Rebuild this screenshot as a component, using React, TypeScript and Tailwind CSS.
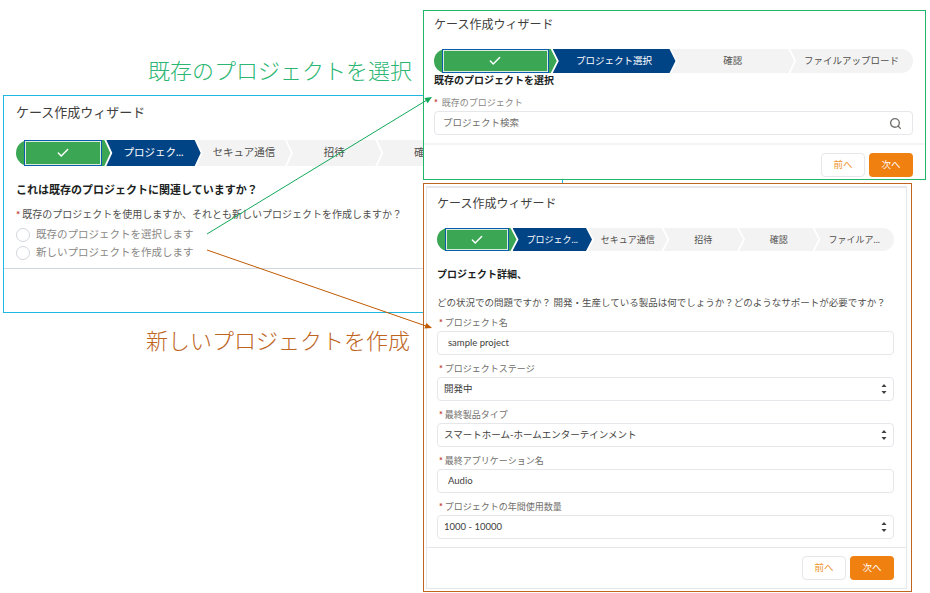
import { Check, Search } from "lucide-react"

const stepShapes = {
  first:
    "rounded-l-full [clip-path:polygon(0_0,calc(100%-6px)_0,100%_50%,calc(100%-6px)_100%,0_100%)]",
  middle:
    "[clip-path:polygon(0_0,calc(100%-6px)_0,100%_50%,calc(100%-6px)_100%,0_100%,6px_50%)]",
  last: "rounded-r-full [clip-path:polygon(0_0,100%_0,100%_100%,0_100%,6px_50%)]",
}

function Stepper({ steps, className }: { steps: string[]; className: string }) {
  return (
    <div className={`flex ${className}`}>
      {/* done step with the focus box */}
      <div className={`relative -mr-1 flex-1 bg-[#3ba755] px-2.5 ${stepShapes.first}`}>
        <div className="absolute inset-y-0 left-2 right-2 border border-[#0b5cab]">
          <div className="flex h-full items-center justify-center border border-white/80 bg-[#3ba755]">
            <Check size={14} strokeWidth={2.5} className="text-white" />
          </div>
        </div>
      </div>
      {steps.map((label, i) => (
        <div
          key={label}
          className={`flex min-w-0 flex-1 items-center justify-center whitespace-nowrap px-2.5 ${
            i === steps.length - 1 ? stepShapes.last : `-mr-1 ${stepShapes.middle}`
          } ${i === 0 ? "bg-[#014486] text-white" : "bg-[#f3f3f3] text-[#514f4d]"}`}
        >
          {label}
        </div>
      ))}
    </div>
  )
}

function Star() {
  return <span className="font-bold text-[#c23934]">*</span>
}

function SelectArrows() {
  return (
    <svg width="6" height="12" viewBox="0 0 6 12" className="text-[#3e3e3c]">
      <polygon points="3,1 5.5,4 0.5,4" fill="currentColor" />
      <polygon points="3,11 5.5,8 0.5,8" fill="currentColor" />
    </svg>
  )
}

function Field({ label, value, select, inset }: { label: string; value: string; select?: boolean; inset?: boolean }) {
  return (
    <div>
      <div className="flex h-3 items-center gap-0.5 pl-0.5 text-[9px] text-[#706e6b]">
        <Star />
        {label}
      </div>
      <div
        className={`mt-0.5 flex h-6 items-center justify-between rounded border border-gray-200 bg-white pr-1.5 text-[9.5px] text-[#3e3e3c] ${
          inset ? "pl-2.5" : "pl-1.5"
        }`}
      >
        {value}
        {select && <SelectArrows />}
      </div>
    </div>
  )
}

function Buttons() {
  return (
    <div className="flex justify-end gap-1 text-[9.5px]">
      <button className="h-6 w-11 rounded border border-gray-200 bg-white text-[#f0932b]">前へ</button>
      <button className="h-6 w-11 rounded bg-[#f08010] text-white">次へ</button>
    </div>
  )
}

function Radio({ label }: { label: string }) {
  return (
    <div className="flex h-[18px] items-center gap-1.5 text-[#8a8886]">
      <span className="size-3.5 rounded-full border border-gray-300 bg-white" />
      {label}
    </div>
  )
}

export default function App() {
  return (
    <div className="relative h-[593px] w-[930px] overflow-hidden bg-white font-['Lato','Noto_Sans_CJK_JP',sans-serif] text-[#3e3e3c]">
      {/* first wizard */}
      <div className="absolute left-[3px] top-[95px] h-[218px] w-[560px] border border-[#1eb8e0] bg-white">
        <div className="pl-3 pt-2">
          <h2 className="h-4 text-[13px] leading-4">ケース作成ウィザード</h2>
          <Stepper
            className="mt-5 h-[26px] text-[10.5px]"
            steps={["プロジェク...", "セキュア通信", "招待", "確認", "ファイルア..."]}
          />
          <h3 className="mt-4 h-4 text-[11px] font-bold leading-4 text-[#201f1e]">
            これは既存のプロジェクトに関連していますか？
          </h3>
          <div className="mt-2.5 flex h-3 items-center gap-0.5 text-[10px] text-[#514f4d]">
            <Star />
            既存のプロジェクトを使用しますか、それとも新しいプロジェクトを作成しますか？
          </div>
          <div className="mt-1.5 text-[10.5px]">
            <Radio label="既存のプロジェクトを選択します" />
            <Radio label="新しいプロジェクトを作成します" />
          </div>
        </div>
        <div className="mt-1.5 border-t border-gray-300" />
      </div>

      {/* existing project */}
      <div className="absolute left-[423px] top-[10px] h-[170px] w-[503px] border border-[#1fb868] bg-white">
        <div className="pl-2.5 pr-3 pt-1.5">
          <h2 className="h-4 text-xs leading-4">ケース作成ウィザード</h2>
          <Stepper
            className="mt-4 h-6 text-[9.5px]"
            steps={["プロジェクト選択", "確認", "ファイルアップロード"]}
          />
          <h3 className="h-3.5 text-[10px] font-bold leading-[14px] text-[#201f1e]">既存のプロジェクトを選択</h3>
          <div className="mt-2.5 flex h-3 items-center gap-1 text-[9px] text-[#8a8886]">
            <Star />
            既存のプロジェクト
          </div>
          <div className="mt-0.5 flex h-6 items-center justify-between rounded border border-gray-200 pl-2 pr-2.5 text-[9.5px] text-[#706e6b]">
            プロジェクト検索
            <Search size={13} strokeWidth={2.5} />
          </div>
        </div>
        <div className="mt-2 border-t-2 border-gray-100 pl-2.5 pr-3 pt-2">
          <Buttons />
        </div>
      </div>

      {/* new project */}
      <div className="absolute left-[423px] top-[183px] h-[409px] w-[489px] border border-[#c0651f] bg-white pb-0.5 pl-0.5 pr-1 pt-0.5">
        <div className="h-full border border-t-2 border-gray-200">
          <div className="pl-2.5 pr-3 pt-2">
            <h2 className="h-4 text-xs leading-4">ケース作成ウィザード</h2>
            <Stepper
              className="mt-4 h-[23px] text-[9px]"
              steps={["プロジェク...", "セキュア通信", "招待", "確認", "ファイルア..."]}
            />
            <h3 className="mt-4 h-3.5 text-[10px] font-bold leading-[14px] text-[#201f1e]">プロジェクト詳細、</h3>
            <p className="mt-4 h-3 whitespace-nowrap text-[9.5px] leading-3 text-[#514f4d]">
              どの状況での問題ですか？ 開発・生産している製品は何でしょうか？どのようなサポートが必要ですか？
            </p>
            <div className="mt-2 flex flex-col gap-2">
              <Field label="プロジェクト名" value="sample project" inset />
              <Field label="プロジェクトステージ" value="開発中" select />
              <Field label="最終製品タイプ" value="スマートホーム-ホームエンターテインメント" select />
              <Field label="最終アプリケーション名" value="Audio" inset />
              <Field label="プロジェクトの年間使用数量" value="1000 - 10000" select />
            </div>
          </div>
          <div className="mt-2 border-t border-gray-200 pl-2.5 pr-3 pt-2">
            <Buttons />
          </div>
        </div>
      </div>

      {/* annotations */}
      <div className="absolute left-[148px] top-[56px] font-['Liberation_Serif','Noto_Sans_CJK_JP',serif] text-[22px] font-light leading-8 text-[#2bb673]">
        既存のプロジェクトを選択
      </div>
      <div className="absolute left-[146px] top-[326px] font-['Liberation_Serif','Noto_Sans_CJK_JP',serif] text-[22px] font-light leading-8 text-[#c0651f]">
        新しいプロジェクトを作成
      </div>
      <svg width="930" height="593" className="pointer-events-none absolute inset-0">
        <line x1="207" y1="234" x2="427" y2="100" stroke="#14a85a" strokeWidth="1" />
        <polygon points="432,97 427.6,103.2 424.4,98" fill="#14a85a" />
        <line x1="207" y1="250" x2="426" y2="326" stroke="#c05a00" strokeWidth="1" />
        <polygon points="432,328 424.4,328.5 426.4,322.9" fill="#c05a00" />
      </svg>
    </div>
  )
}
